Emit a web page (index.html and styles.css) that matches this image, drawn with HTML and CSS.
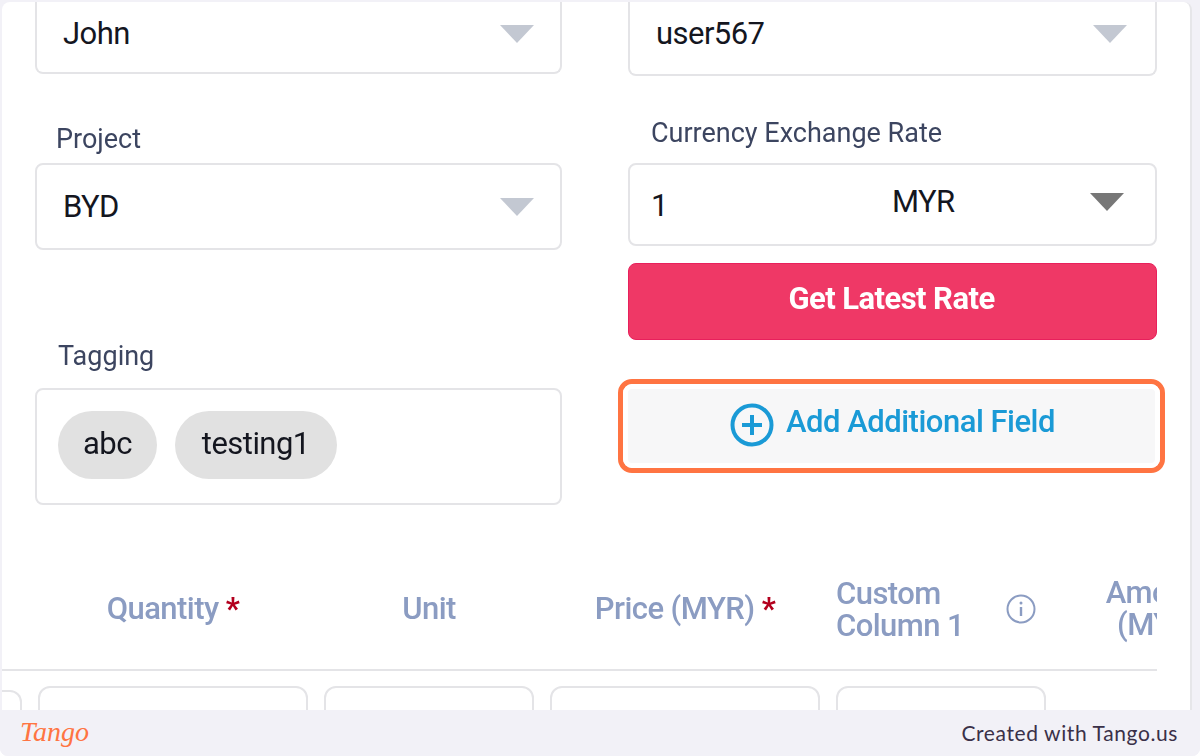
FILE: index.html
```html
<!DOCTYPE html>
<html lang="en">
<head>
<meta charset="utf-8">
<title>Add Additional Field</title>
<link rel="stylesheet" href="styles.css">
</head>
<body>
<div class="shot">
  <main class="card">
    <div class="form">
      <div class="col col-left">
        <div class="field field-cut"><span class="value">John</span><span class="caret"></span></div>
        <div class="label label-project">Project</div>
        <div class="field field-project"><span class="value">BYD</span><span class="caret"></span></div>
        <div class="label label-tagging">Tagging</div>
        <div class="tags"><span class="chip chip-short">abc</span><span class="chip chip-long">testing1</span></div>
      </div>
      <div class="col col-right">
        <div class="field field-cut field-user"><span class="value value-user">user567</span><span class="caret"></span></div>
        <div class="label label-rate">Currency Exchange Rate</div>
        <div class="field field-rate">
          <span class="value rate-num">1</span>
          <span class="value rate-cur">MYR</span>
          <span class="caret caret-dark"></span>
        </div>
        <button class="btn-rate" type="button">Get Latest Rate</button>
        <button class="btn-add" type="button">
          <svg class="plus" viewBox="0 0 44 44" aria-hidden="true"><circle cx="22" cy="22" r="19.5" fill="none" stroke="#1a9ad6" stroke-width="4"/><path d="M22 12v20M12 22h20" fill="none" stroke="#1a9ad6" stroke-width="4"/></svg>
          <span class="add-text">Add Additional Field</span>
        </button>
      </div>
    </div>
    <div class="table">
      <div class="row row-head">
        <div></div>
        <div class="th">Quantity <b class="req">*</b></div>
        <div class="th">Unit</div>
        <div class="th">Price (MYR) <b class="req">*</b></div>
        <div class="th th-custom">
          <span class="custom-text">Custom<br>Column 1</span>
          <svg class="info" viewBox="0 0 30 30" aria-hidden="true"><circle cx="15" cy="15" r="13.5" fill="none" stroke="#8b9cc2" stroke-width="2"/><path d="M15 13v9" stroke="#8b9cc2" stroke-width="2.4" fill="none"/><circle cx="15" cy="9" r="1.5" fill="#8b9cc2"/></svg>
        </div>
        <div class="th th-amount">Amount<br>(MYR)</div>
      </div>
      <div class="row row-body">
        <div class="cell cell-first"></div>
        <div class="cell"></div>
        <div class="cell"></div>
        <div class="cell"></div>
        <div class="cell"></div>
      </div>
    </div>
  </main>
  <footer class="footer">
    <span class="brand">Tango</span>
    <span class="credit">Created with Tango.us</span>
  </footer>
</div>
</body>
</html>
```

FILE: styles.css
```css
* { box-sizing: border-box; }
html, body { margin: 0; padding: 0; }
body { width: 1200px; height: 756px; overflow: hidden; background: #fff; font-family: Roboto, "Liberation Sans", sans-serif; color: #14161f; }

.shot { width: 1200px; height: 756px; background: #f2f1f7; display: flex; flex-direction: column; padding-top: 2px; border-radius: 0 0 8px 8px; }
.card { flex: 1; min-height: 0; margin: 0 8px 0 2px; background: #fff; border-radius: 8px 8px 0 0; overflow: hidden; border-right: 2px solid #e6e6e9; filter: blur(0.4px); }

.form { height: 566px; display: flex; padding-left: 33px; gap: 66px; overflow: hidden; }
.col { display: flex; flex-direction: column; align-items: stretch; }
.col-left { width: 527px; }
.col-right { width: 529px; }

.field { display: flex; align-items: center; position: relative; background: #fff; border: 2px solid #e4e4e7; border-radius: 8px; }
.field-cut { height: 72px; border-top: 0; border-radius: 0 0 8px 8px; padding: 0 26px 6px 26px; justify-content: space-between; flex: none; }
.field-user { height: 74px; padding-left: 26px; padding-right: 28px; padding-bottom: 8px; }
.value { font-size: 31px; line-height: 36px; letter-spacing: -0.55px; }

.caret { width: 0; height: 0; border-left: 17px solid transparent; border-right: 17px solid transparent; border-top: 18px solid #c3c8d2; }
.caret-dark { border-top-color: #777; }

.label { font-size: 27px; line-height: 30px; color: #3c4560; flex: none; }
.label-project { margin: 50px 0 9px 21px; }
.label-tagging { margin: 91px 0 17px 23px; }
.label-rate { margin: 42px 0 15px 23px; }

.field-project { height: 87px; flex: none; padding: 0 26px 0 26px; justify-content: space-between; }
.field-rate { height: 83px; flex: none; padding: 0 31px 0 21px; }
.rate-num { margin-top: 3px; }
.rate-cur { margin-left: 224px; margin-top: -6px; }
.field-rate .caret { margin-left: auto; margin-top: -6px; }

.tags { height: 117px; flex: none; display: flex; align-items: flex-start; gap: 18px; padding: 21px 21px; border: 2px solid #e4e4e7; border-radius: 8px; }
.chip { height: 68px; border-radius: 34px; background: #e1e1e1; font-size: 31px; line-height: 66px; letter-spacing: -0.55px; }
.chip-short { padding: 0 25px; }
.chip-long { padding: 0 27px; }

.btn-rate { height: 77px; flex: none; margin-top: 17px; border: 1px solid #e8205c; border-radius: 8px; background: #ef3866; color: #fff; font: 700 31px Roboto, sans-serif; letter-spacing: -0.55px; padding: 0 2px 6px 0; }
.btn-add { flex: none; height: 94px; margin: 39px -8px 0 -10px; padding: 0 0 10px 2px; border: 5px solid #ff7442; border-radius: 14px; outline: 5px solid #fff; outline-offset: -10px; background: #f7f7f8; color: #1a9ad6; font: 500 31px Roboto, sans-serif; letter-spacing: -0.5px; display: flex; align-items: center; justify-content: center; gap: 12px; }
.plus { width: 44px; height: 44px; margin-top: 8px; flex: none; }

.table { width: 1155px; overflow: hidden; }
.row { display: grid; grid-template-columns: 20px 270px 210px 270px 210px 194px; column-gap: 16px; }
.row-head { height: 103px; padding-bottom: 20px; border-bottom: 2px solid #e4e4e7; align-items: center; }
.th { font-size: 31px; font-weight: 500; line-height: 32px; letter-spacing: -0.55px; color: #8b9cc2; text-align: center; white-space: nowrap; }
.req { color: #b3001e; font-weight: 700; }
.th-custom { display: flex; align-items: center; justify-content: space-between; text-align: left; padding-right: 10px; }
.custom-text { margin-top: 2px; }
.info { width: 30px; height: 30px; }
.row-body { padding-top: 15px; }
.cell { height: 80px; border: 2px solid #e4e4e7; border-radius: 12px; }
.cell-first { border-left: 0; border-radius: 0 12px 12px 0; margin-top: 4px; }

.footer { flex: none; height: 46px; display: flex; align-items: center; justify-content: space-between; padding: 0 22px 2px 20px; background: #f2f1f7; border-radius: 0 0 8px 8px; }
.brand { font-family: "Liberation Serif", serif; font-style: italic; font-size: 28px; color: #ff7442; }
.credit { font-family: Lato, sans-serif; font-size: 21px; letter-spacing: 0.6px; color: #3a3048; }
```
